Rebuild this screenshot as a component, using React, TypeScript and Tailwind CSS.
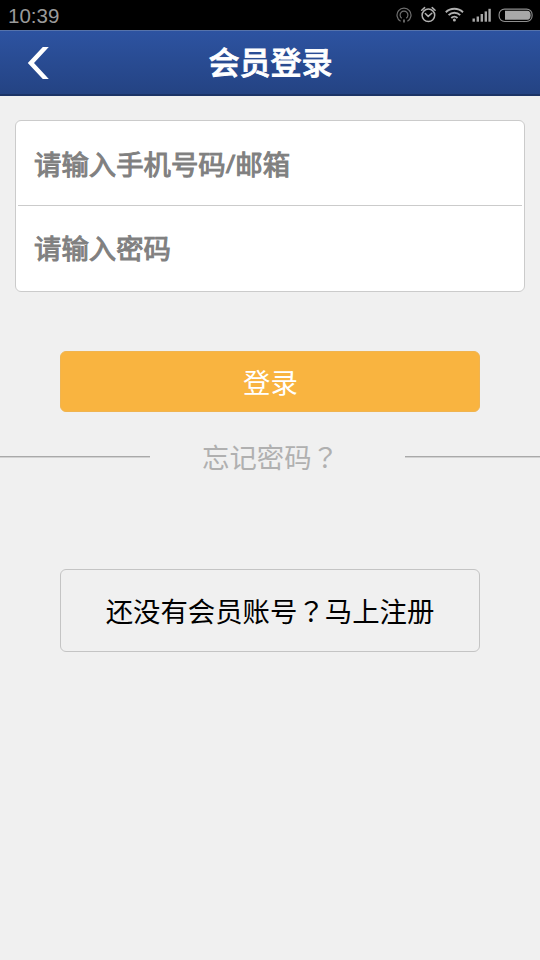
function StatusIcons() {
  return (
    <svg className="mr-1 h-[30px] w-[140px]" viewBox="396 0 140 30" fill="none">
      <g stroke="#6f6f6f" strokeWidth="1.2">
        <path d="M400.6 21.2A7 7 0 1 1 407.4 21.2" />
        <path d="M401.7 18.2A3.9 3.9 0 1 1 406.3 18.2" />
        <path d="M404 19.5V22.5" strokeWidth="1.8" />
      </g>
      <g stroke="#b0b0b0" strokeWidth="1.5" strokeLinecap="round">
        <circle cx="428.4" cy="15.3" r="6.3" />
        <path d="M425.3 13.5L428.2 16.4L431.8 13.2" />
        <path d="M421.7 10.2L424.6 7.6M432.2 7.6L435.1 10.2" />
      </g>
      <g stroke="#b0b0b0" strokeWidth="1.9">
        <path d="M445.8 12.2A12.3 12.3 0 0 1 463 12.2" />
        <path d="M448.6 15.2A8.2 8.2 0 0 1 460.2 15.2" />
        <path d="M451.3 18A4.5 4.5 0 0 1 457.5 18" />
      </g>
      <circle cx="454.4" cy="20" r="1.5" fill="#b0b0b0" />
      <g fill="#a6a6a6">
        <rect x="472.5" y="18.5" width="2.4" height="3.2" />
        <rect x="476.6" y="16.5" width="2.4" height="5.2" />
        <rect x="480.6" y="14" width="2.4" height="7.7" />
        <rect x="484.6" y="11.4" width="2.4" height="10.3" />
        <rect x="488.4" y="8.8" width="2.4" height="12.9" />
      </g>
      <rect x="499.1" y="9.1" width="33" height="12.4" rx="5.5" stroke="#8e8e8e" strokeWidth="1.1" />
      <path d="M505 10.8H527.5Q530.6 11 530.6 15.3T527.5 19.8H505Z" fill="#a8a8a8" />
    </svg>
  );
}

function QuestionMark() {
  return <span className="font-['Noto_Sans_CJK_TC',sans-serif]" lang="zh-TW">？</span>;
}

export default function App() {
  return (
    <div lang="zh-CN" className="flex h-[960px] w-[540px] flex-col overflow-hidden bg-[#f0f0f0] font-['Noto_Sans_CJK_SC',sans-serif] text-[27.4px] leading-[40px]">
      <div className="flex h-[30px] shrink-0 items-center justify-between bg-black">
        <span className="pl-2 pt-px font-['Liberation_Sans',sans-serif] text-[20.5px] leading-[27px] text-[#9a9a9a]">10:39</span>
        <StatusIcons />
      </div>
      <header className="grid h-[66px] shrink-0 grid-cols-[80px_1fr_80px] items-center border-t border-b-2 border-t-[#5673ab] border-b-[#1c3466] bg-linear-to-b from-[#2d53a1] to-[#244383]">
        <button aria-label="返回" className="pl-[27px]">
          <svg className="h-8 w-[23px]" viewBox="0 0 23 32">
            <path d="M15.8 0H21.8L7 16L21.8 32H15.8L0.8 16Z" fill="#fff" />
          </svg>
        </button>
        <h1 className="pb-[3px] pl-px text-center text-[31px] font-medium text-white [-webkit-text-stroke:0.8px_#fff]">会员登录</h1>
      </header>

      <form className="mx-[15px] mt-6 flex h-[172px] shrink-0 flex-col rounded-md border border-[#cbcbcb] bg-white px-0.5 text-[#808080] [-webkit-text-stroke:1px_#808080]">
        <div className="flex h-[85px] items-center border-b border-[#cbcbcb] pl-4">
          请输入手机号码<span className="font-['Open_Sans',sans-serif] text-[26px]">/</span>邮箱
        </div>
        <div className="flex h-[85px] items-center pb-[3px] pl-4">请输入密码</div>
      </form>

      <button className="mx-[60px] mt-[59px] flex h-[61px] shrink-0 items-center justify-center rounded-md border border-[#f0b450] bg-[#f9b440] pb-0.5 pl-px text-white">
        登录
      </button>

      <div className="mt-[25px] flex h-10 shrink-0 items-center text-[#b0b0b0]">
        <div className="h-0.5 w-[150px] border-t border-[#a9a9a9] bg-[#d2d2d2]" />
        <span className="w-[255px] pb-0.5 pl-[52px]">忘记密码<QuestionMark /></span>
        <div className="h-0.5 flex-1 border-t border-[#a9a9a9] bg-[#d2d2d2]" />
      </div>

      <button className="mx-[60px] mt-[92px] flex h-[83px] shrink-0 items-center justify-center rounded-md border border-[#c4c4c4] pb-0.5 text-black">
        还没有会员账号<QuestionMark />马上注册
      </button>
    </div>
  );
}
